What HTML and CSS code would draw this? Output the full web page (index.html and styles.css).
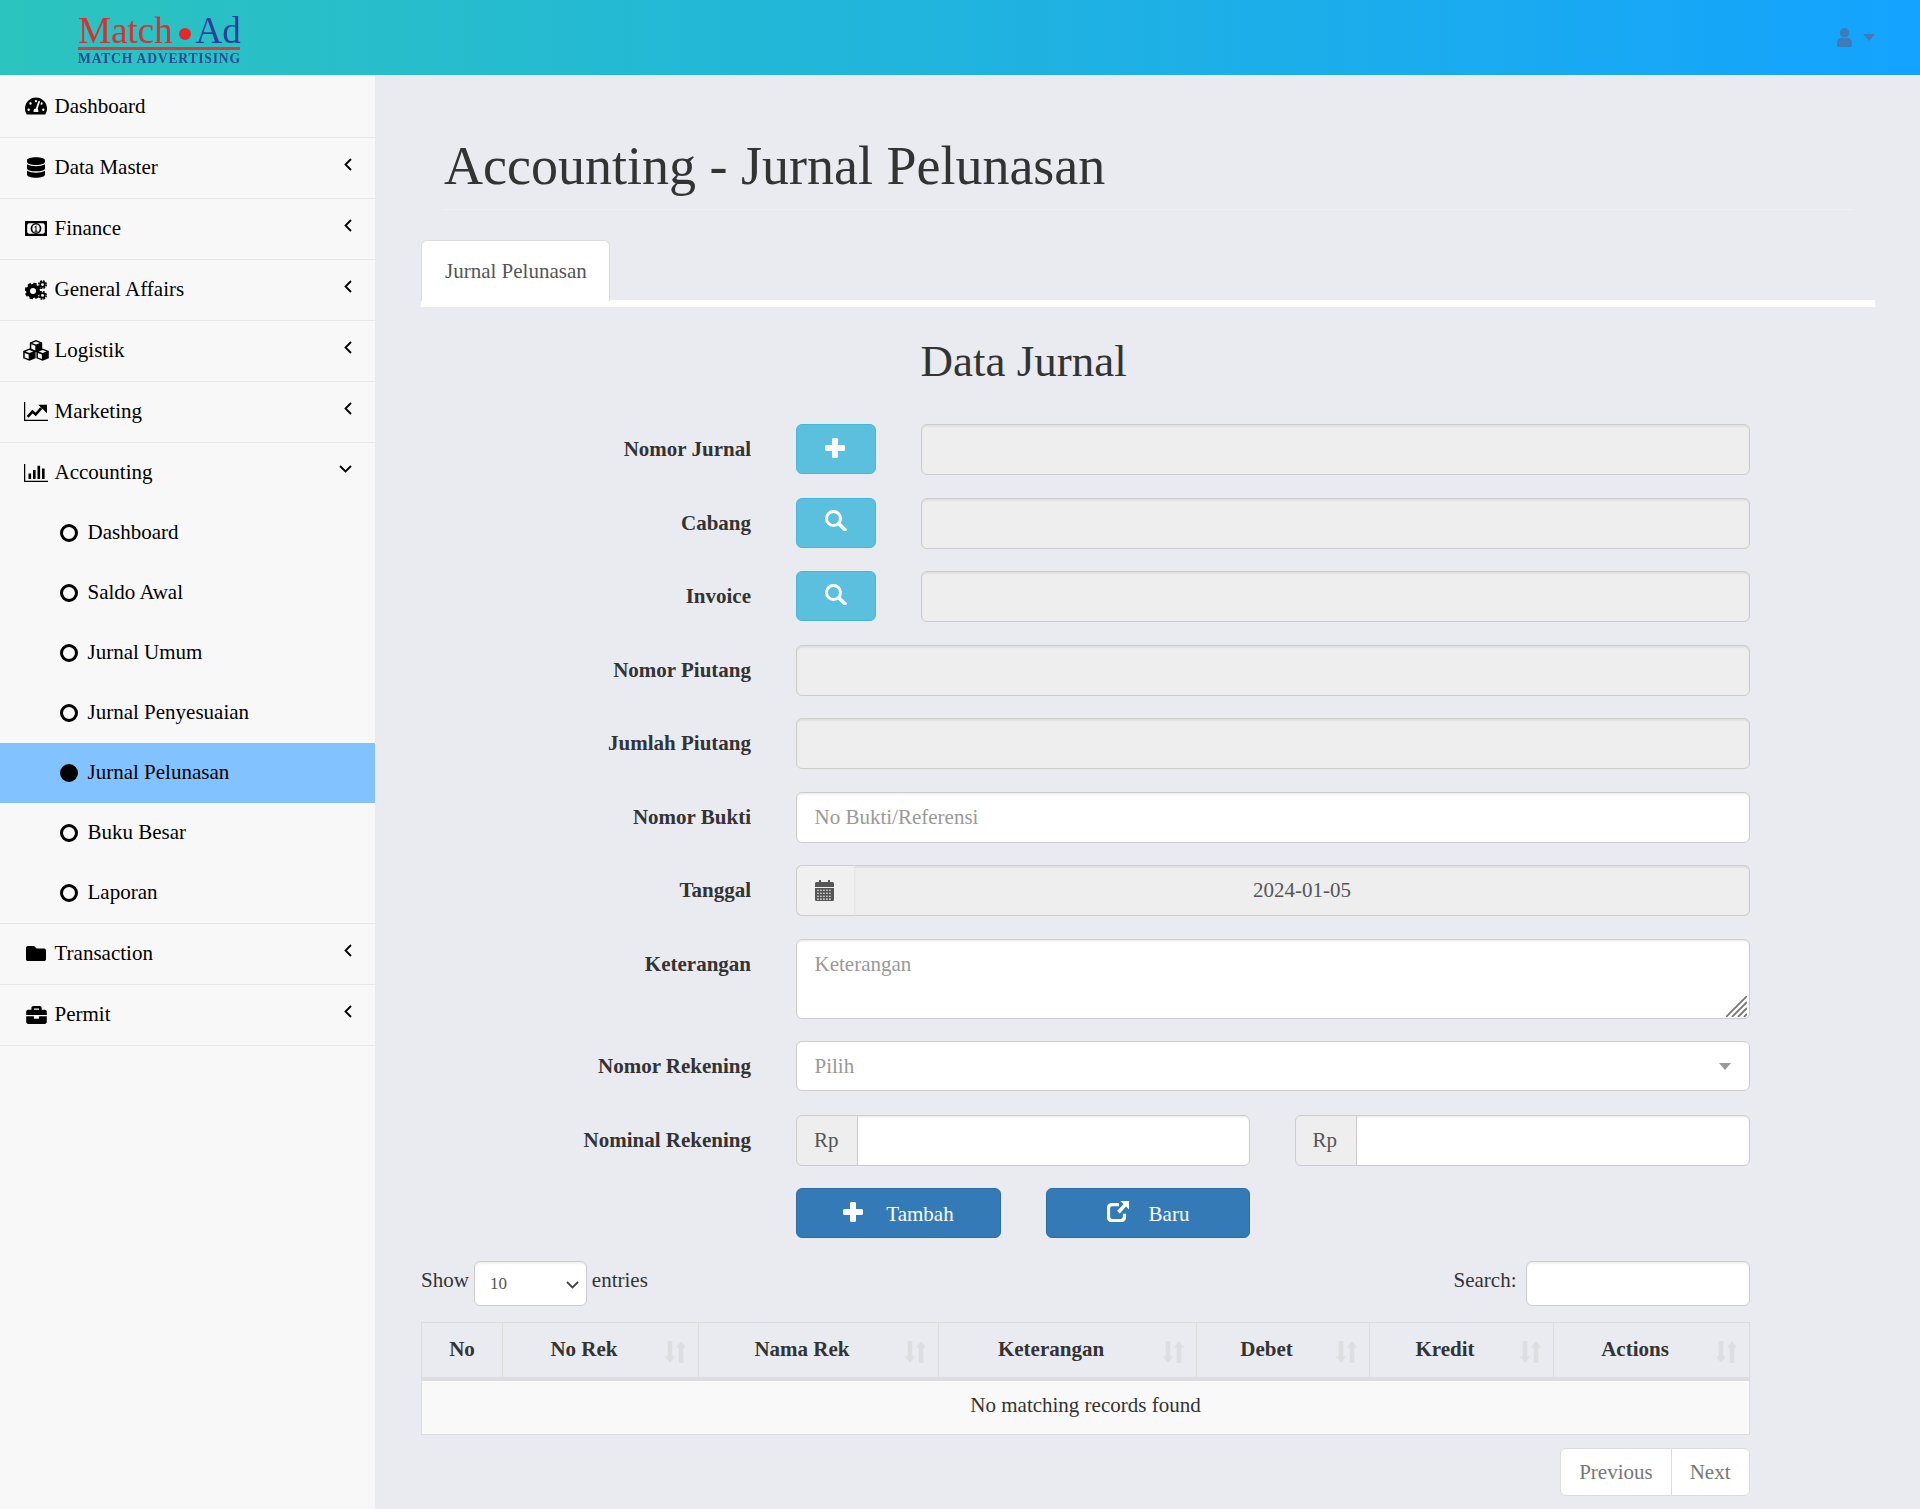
FILE: index.html
```html
<!DOCTYPE html>
<html lang="id">
<head>
<meta charset="utf-8">
<title>Accounting - Jurnal Pelunasan</title>
<link rel="stylesheet" href="styles.css">
</head>
<body>
<svg class="sprite" aria-hidden="true">
  <symbol id="i-dash" viewBox="0 0 576 512"><path d="M288 32C128.94 32 0 160.94 0 320c0 52.8 14.25 102.26 39.06 144.8 5.61 9.62 16.3 15.2 27.44 15.2h443c11.14 0 21.83-5.58 27.44-15.2C561.75 422.26 576 372.8 576 320c0-159.06-128.94-288-288-288zm0 64c14.71 0 26.58 10.13 30.32 23.65-1.11 2.26-2.64 4.23-3.45 6.67l-9.22 27.67c-5.13 3.49-10.97 6.01-17.64 6.01-17.67 0-32-14.33-32-32S270.33 96 288 96zM96 384c-17.67 0-32-14.33-32-32s14.33-32 32-32 32 14.33 32 32-14.33 32-32 32zm48-160c-17.67 0-32-14.33-32-32s14.33-32 32-32 32 14.33 32 32-14.33 32-32 32zm246.77-72.41l-61.33 184C343.13 347.33 352 364.54 352 384c0 11.72-3.38 22.55-8.88 32H232.88c-5.5-9.45-8.88-20.28-8.88-32 0-33.94 26.5-61.43 59.9-63.59l61.34-184.01c4.17-12.56 17.73-19.45 30.36-15.17 12.57 4.19 19.35 17.79 15.17 30.36zm14.66 57.2l15.52-46.55c3.47-1.29 7.13-2.23 11.05-2.23 17.67 0 32 14.33 32 32s-14.33 32-32 32c-11.38-.01-20.89-6.28-26.57-15.22zM480 384c-17.67 0-32-14.33-32-32s14.33-32 32-32 32 14.33 32 32-14.33 32-32 32z"/></symbol>
  <symbol id="i-db" viewBox="0 0 448 512"><path d="M448 73.143v45.714C448 159.143 347.667 192 224 192S0 159.143 0 118.857V73.143C0 32.857 100.333 0 224 0s224 32.857 224 73.143zM448 176v102.857C448 319.143 347.667 352 224 352S0 319.143 0 278.857V176c48.125 33.143 136.208 48.572 224 48.572S399.874 209.143 448 176zm0 160v102.857C448 479.143 347.667 512 224 512S0 479.143 0 438.857V336c48.125 33.143 136.208 48.572 224 48.572S399.874 369.143 448 336z"/></symbol>
  <symbol id="i-money" viewBox="0 0 22 15"><rect width="22" height="15"/><path d="M3.500 2.200h15a1.500 1.500 0 0 0 1.300 1.300v8a1.500 1.500 0 0 0-1.300 1.300h-15a1.500 1.500 0 0 0-1.300-1.300v-8a1.500 1.500 0 0 0 1.300-1.300z" fill="#f8f8f8"/><ellipse cx="11" cy="7.500" rx="5.400" ry="5.400"/><ellipse cx="11" cy="7.500" rx="3.700" ry="4.100" fill="#f8f8f8"/><path d="M9.600 5.800 11.500 4.500v5.300h1v1h-3v-1h1V6.200l-.8.5z"/></symbol>
  <symbol id="i-cogs" viewBox="0 0 22 20"><circle cx="8" cy="11" r="5" fill="none" stroke="#000" stroke-width="4"/><circle cx="8" cy="11" r="7" fill="none" stroke="#000" stroke-width="2.600" stroke-dasharray="3.300 2.200"/><circle cx="17.500" cy="4.600" r="2.300" fill="none" stroke="#000" stroke-width="1.700"/><circle cx="17.500" cy="4.600" r="3.700" fill="none" stroke="#000" stroke-width="1.500" stroke-dasharray="1.900 1"/><circle cx="17.500" cy="15.400" r="2.300" fill="none" stroke="#000" stroke-width="1.700"/><circle cx="17.500" cy="15.400" r="3.700" fill="none" stroke="#000" stroke-width="1.500" stroke-dasharray="1.900 1"/></symbol>
  <symbol id="i-cubes" viewBox="0 0 26 21"><path d="M13 0l6.200 2.400v7.300L13 12.200 6.800 9.700V2.400z"/><path d="M13 1.500l3.900 1.500L13 4.500 9.100 3z" fill="#f8f8f8"/><path d="M8.300 4.300l4 1.500v4.600l-4-1.600z" fill="#f8f8f8"/><path d="M6.400 8.600l6.200 2.400v7.300L6.400 20.800.2 18.300V11z"/><path d="M6.400 10.100l3.900 1.500-3.900 1.500-3.900-1.500z" fill="#f8f8f8"/><path d="M1.700 12.900l4 1.500V19l-4-1.600z" fill="#f8f8f8"/><path d="M19.600 8.600l6.200 2.400v7.300l-6.200 2.500-6.200-2.500V11z"/><path d="M19.600 10.100l3.900 1.500-3.900 1.500-3.900-1.500z" fill="#f8f8f8"/><path d="M14.900 12.900l4 1.500V19l-4-1.600z" fill="#f8f8f8"/></symbol>
  <symbol id="i-line" viewBox="0 0 24 19"><path d="M.6 0v18.300H24" fill="none" stroke="#000" stroke-width="1.300"/><path d="M3.600 14.800 8.500 9.500l3.200 3 5.500-6.300" fill="none" stroke="#000" stroke-width="2.600"/><path d="M14.200 2.800H23v8.500z"/></symbol>
  <symbol id="i-bar" viewBox="0 0 24 18"><path d="M.6 0v17.300H24" fill="none" stroke="#000" stroke-width="1.300"/><path d="M4.500 9.500h2.600V15H4.500zM9 6h2.600v9H9zM13.500 1.800h2.600V15h-2.600zM18 4.500h2.600V15H18z"/></symbol>
  <symbol id="i-folder" viewBox="0 64 512 384"><path d="M464 128H272l-64-64H48C21.490 64 0 85.490 0 112v288c0 26.510 21.490 48 48 48h416c26.510 0 48-21.490 48-48V176c0-26.510-21.490-48-48-48z"/></symbol>
  <symbol id="i-case" viewBox="0 32 512 448"><path d="M320 336c0 8.840-7.160 16-16 16h-96c-8.840 0-16-7.160-16-16v-48H0v144c0 25.600 22.400 48 48 48h416c25.600 0 48-22.400 48-48V288H320v48zm144-208h-80V80c0-25.600-22.400-48-48-48H176c-25.600 0-48 22.400-48 48v48H48c-25.600 0-48 22.400-48 48v80h512v-80c0-25.600-22.400-48-48-48zm-144 0H192V96h128v32z"/></symbol>
  <symbol id="i-plus" viewBox="0 0 20 20"><path d="M7 1.500C7 .7 7.700 0 8.500 0h3c.8 0 1.500.7 1.500 1.500V7h5.500c.8 0 1.500.7 1.500 1.500v3c0 .8-.7 1.500-1.500 1.500H13v5.500c0 .8-.7 1.500-1.500 1.500h-3C7.700 20 7 19.300 7 18.500V13H1.500C.7 13 0 12.300 0 11.500v-3C0 7.700.7 7 1.500 7H7z" fill="#fff"/></symbol>
  <symbol id="i-search" viewBox="0 0 22 21"><circle cx="8.500" cy="8.500" r="7" fill="none" stroke="#fff" stroke-width="3"/><path d="M13.800 13.800 20 19.700" fill="none" stroke="#fff" stroke-width="3.600" stroke-linecap="round"/></symbol>
  <symbol id="i-share" viewBox="0 0 22 21"><path d="M12 3.600H5.200C3 3.600 1.500 5.100 1.500 7.300v8.500c0 2.200 1.500 3.700 3.700 3.700h8.600c2.200 0 3.700-1.500 3.700-3.700v-3" fill="none" stroke="#fff" stroke-width="3.200"/><path d="M13.500 0H22v8.500l-2.900-2.900-6.300 6.800-2.700-2.700 6.500-6.500z" fill="#fff"/></symbol>
  <symbol id="i-cal" viewBox="0 0 19 21"><path d="M4 0h2v2h7V0h2v2h2.500A1.500 1.500 0 0 1 19 3.500V7H0V3.500A1.500 1.500 0 0 1 1.500 2H4zM0 8h19v11.500a1.500 1.500 0 0 1-1.500 1.500h-16A1.500 1.500 0 0 1 0 19.500z" fill="#555"/><path d="M2 10.200h15M2 13.200h15M2 16.200h15M2 19.100h15" fill="none" stroke="#eee" stroke-width="1.100" stroke-dasharray="1.800 1.200"/></symbol>
  <symbol id="i-user" viewBox="0 0 15 19"><circle cx="7.500" cy="4.700" r="4.700"/><path d="M0 15a5.500 5.500 0 0 1 5-5.200c1.700.8 3.300.8 5 0A5.500 5.500 0 0 1 15 15v2a2 2 0 0 1-2 2H2a2 2 0 0 1-2-2z"/></symbol>
  <symbol id="i-sort" viewBox="0 0 21 22"><path d="M2.700 0h4.600v15.500H10L5 22l-5-6.500h2.700zM13.700 22h4.600V6.500H21L16 0l-5 6.500h2.700z" fill="#dcdee1"/></symbol>
</svg>

<header class="topbar">
  <div class="logo">
    <div class="logo-main"><span class="logo-red">Match</span><span class="logo-dot"></span><span class="logo-blue">Ad</span></div>
    <div class="logo-rule"></div>
    <div class="logo-sub">MATCH ADVERTISING</div>
  </div>
  <div class="user-menu">
    <svg class="user-icon"><use href="#i-user"/></svg>
    <span class="caret"></span>
  </div>
</header>

<div class="layout">
  <aside class="sidebar">
    <ul class="nav">
      <li class="nav-item"><span class="nav-ico"><svg class="ic-dash"><use href="#i-dash"/></svg></span>Dashboard</li>
      <li class="nav-item"><span class="nav-ico"><svg class="ic-db"><use href="#i-db"/></svg></span>Data Master<svg class="chev" viewBox="0 0 8 13"><path d="M7 1 1.500 6.500 7 12"/></svg></li>
      <li class="nav-item"><span class="nav-ico"><svg class="ic-money"><use href="#i-money"/></svg></span>Finance<svg class="chev" viewBox="0 0 8 13"><path d="M7 1 1.500 6.500 7 12"/></svg></li>
      <li class="nav-item"><span class="nav-ico"><svg class="ic-cogs"><use href="#i-cogs"/></svg></span>General Affairs<svg class="chev" viewBox="0 0 8 13"><path d="M7 1 1.500 6.500 7 12"/></svg></li>
      <li class="nav-item"><span class="nav-ico"><svg class="ic-cubes"><use href="#i-cubes"/></svg></span>Logistik<svg class="chev" viewBox="0 0 8 13"><path d="M7 1 1.500 6.500 7 12"/></svg></li>
      <li class="nav-item"><span class="nav-ico"><svg class="ic-line"><use href="#i-line"/></svg></span>Marketing<svg class="chev" viewBox="0 0 8 13"><path d="M7 1 1.500 6.500 7 12"/></svg></li>
      <li class="nav-group">
        <div class="nav-head"><span class="nav-ico"><svg class="ic-bar"><use href="#i-bar"/></svg></span>Accounting<svg class="chev-down" viewBox="0 0 13 8"><path d="M1 1l5.500 5.500L12 1"/></svg></div>
        <ul class="sub">
          <li class="sub-item"><span class="dot"></span>Dashboard</li>
          <li class="sub-item"><span class="dot"></span>Saldo Awal</li>
          <li class="sub-item"><span class="dot"></span>Jurnal Umum</li>
          <li class="sub-item"><span class="dot"></span>Jurnal Penyesuaian</li>
          <li class="sub-item active"><span class="dot"></span>Jurnal Pelunasan</li>
          <li class="sub-item"><span class="dot"></span>Buku Besar</li>
          <li class="sub-item"><span class="dot"></span>Laporan</li>
        </ul>
      </li>
      <li class="nav-item"><span class="nav-ico"><svg class="ic-folder"><use href="#i-folder"/></svg></span>Transaction<svg class="chev" viewBox="0 0 8 13"><path d="M7 1 1.500 6.500 7 12"/></svg></li>
      <li class="nav-item"><span class="nav-ico"><svg class="ic-case"><use href="#i-case"/></svg></span>Permit<svg class="chev" viewBox="0 0 8 13"><path d="M7 1 1.500 6.500 7 12"/></svg></li>
    </ul>
  </aside>

  <main class="main">
    <div class="page-head"><h1>Accounting - Jurnal Pelunasan</h1></div>
    <div class="tabs"><div class="tab">Jurnal Pelunasan</div></div>

    <h3 class="form-title">Data Jurnal</h3>
    <form class="form">
      <div class="row">
        <label class="lbl">Nomor Jurnal</label>
        <div class="field with-btn">
          <button type="button" class="btn-info"><svg class="ic-plus"><use href="#i-plus"/></svg></button>
          <input class="ctl" disabled>
        </div>
      </div>
      <div class="row">
        <label class="lbl">Cabang</label>
        <div class="field with-btn">
          <button type="button" class="btn-info"><svg class="ic-search"><use href="#i-search"/></svg></button>
          <input class="ctl" disabled>
        </div>
      </div>
      <div class="row">
        <label class="lbl">Invoice</label>
        <div class="field with-btn">
          <button type="button" class="btn-info"><svg class="ic-search"><use href="#i-search"/></svg></button>
          <input class="ctl" disabled>
        </div>
      </div>
      <div class="row">
        <label class="lbl">Nomor Piutang</label>
        <div class="field"><input class="ctl" disabled></div>
      </div>
      <div class="row">
        <label class="lbl">Jumlah Piutang</label>
        <div class="field"><input class="ctl" disabled></div>
      </div>
      <div class="row">
        <label class="lbl">Nomor Bukti</label>
        <div class="field"><input class="ctl" placeholder="No Bukti/Referensi"></div>
      </div>
      <div class="row">
        <label class="lbl">Tanggal</label>
        <div class="field">
          <div class="group">
            <span class="addon addon-date"><svg class="ic-cal"><use href="#i-cal"/></svg></span>
            <input class="ctl ctl-date" value="2024-01-05" disabled>
          </div>
        </div>
      </div>
      <div class="row">
        <label class="lbl">Keterangan</label>
        <div class="field area-wrap">
          <textarea class="ctl ctl-area" placeholder="Keterangan"></textarea>
          <svg class="grip" viewBox="0 0 21 21"><path d="M0 21 21 0M6 21 21 6M12 21l9-9M18 21l3-3"/></svg>
        </div>
      </div>
      <div class="row row-select">
        <label class="lbl lbl-select">Nomor Rekening</label>
        <div class="field">
          <div class="select2"><span>Pilih</span><span class="select2-caret"></span></div>
        </div>
      </div>
      <div class="row row-money">
        <label class="lbl">Nominal Rekening</label>
        <div class="field money">
          <div class="group"><span class="addon">Rp</span><input class="ctl"></div>
          <div class="group"><span class="addon">Rp</span><input class="ctl"></div>
        </div>
      </div>
      <div class="row row-actions">
        <div class="lbl"></div>
        <div class="field money">
          <button type="button" class="btn-primary tambah"><svg class="ic-plus"><use href="#i-plus"/></svg>Tambah</button>
          <button type="button" class="btn-primary baru"><svg class="ic-share"><use href="#i-share"/></svg>Baru</button>
        </div>
      </div>
    </form>

    <section class="dt">
      <div class="dt-top">
        <div class="dt-len">Show
          <span class="dt-select"><select class="dt-sel"><option>10</option></select><svg class="dt-chev" viewBox="0 0 13 8"><path d="M1 1l5.500 5.500L12 1"/></svg></span>
          entries</div>
        <div class="dt-search">Search: <input class="ctl dt-input"></div>
      </div>
      <table class="table">
        <colgroup>
          <col class="c1"><col class="c2"><col class="c3"><col class="c4"><col class="c5"><col class="c6"><col class="c7">
        </colgroup>
        <thead>
          <tr>
            <th class="plain">No</th>
            <th>No Rek<svg class="sort"><use href="#i-sort"/></svg></th>
            <th>Nama Rek<svg class="sort"><use href="#i-sort"/></svg></th>
            <th>Keterangan<svg class="sort"><use href="#i-sort"/></svg></th>
            <th>Debet<svg class="sort"><use href="#i-sort"/></svg></th>
            <th>Kredit<svg class="sort"><use href="#i-sort"/></svg></th>
            <th>Actions<svg class="sort"><use href="#i-sort"/></svg></th>
          </tr>
        </thead>
        <tbody>
          <tr><td colspan="7">No matching records found</td></tr>
        </tbody>
      </table>
      <div class="pager">
        <span class="page-btn first">Previous</span><span class="page-btn last">Next</span>
      </div>
    </section>
  </main>
</div>
</body>
</html>
```
FILE: styles.css
```css
* { box-sizing: border-box; }
html, body { margin: 0; padding: 0; }
body {
  font-family: "Liberation Serif", "Times New Roman", serif;
  font-size: 21px;
  color: #333;
  background: #e9ebf0;
  min-height: 1509px;
}
.sprite { display: none; }
ul { list-style: none; margin: 0; padding: 0; }

/* top bar */
.topbar {
  height: 75px;
  display: flex;
  justify-content: space-between;
  background: linear-gradient(90deg, #2cc4be 0%, #14a3ff 100%);
}
.logo { margin-left: 78px; padding-top: 14px; width: 162px; filter: blur(.35px); }
.logo-main { font-size: 37px; line-height: 34px; white-space: nowrap; height: 33px; }
.logo-red { color: #d9302f; }
.logo-blue { color: #2c3f9c; }
.logo-dot {
  display: inline-block;
  width: 12px;
  height: 12px;
  margin: 0 5px 0 6px;
  border-radius: 50%;
  background: #e5272a;
  vertical-align: 3px;
}
.logo-rule { height: 3px; background: #dc3a36; }
.logo-sub {
  margin-top: 2.400px;
  font-size: 13.6px;
  line-height: 14px;
  font-weight: bold;
  letter-spacing: .8px;
  color: #2b4a94;
  white-space: nowrap;
}
.user-menu { display: flex; align-items: flex-start; padding: 28px 45px 0 0; }
.user-icon { width: 15px; height: 19px; fill: #3c7cb8; }
.caret {
  margin: 6px 0 0 11px;
  border-left: 6px solid transparent;
  border-right: 6px solid transparent;
  border-top: 7px solid #3c7cb8;
}

/* layout */
.layout { display: flex; min-height: 1434px; }
.sidebar { width: 375px; flex: none; background: #f8f8f8; color: #000; }
.nav-item, .nav-head {
  display: flex;
  align-items: center;
  padding: 0 23px 1px 21px;
}
.nav-item { height: 61px; border-bottom: 1px solid #e7e7e7; }
.nav-item:first-child { height: 63px; padding-bottom: 0; }
.nav-head { height: 60px; }
.nav-group { border-bottom: 1px solid #e7e7e7; }
.nav-ico {
  width: 30px;
  margin-right: 3.500px;
  display: flex;
  justify-content: center;
  flex: none;
}
.nav-ico svg { display: block; fill: #000; }
.ic-dash { width: 22px; height: 20px; }
.ic-db { width: 18px; height: 21px; }
.ic-money { width: 22px; height: 15px; }
.ic-cogs { width: 22px; height: 20px; }
.ic-cubes { width: 26px; height: 21px; }
.ic-line { width: 24px; height: 19px; }
.ic-bar { width: 24px; height: 18px; }
.ic-folder { width: 20px; height: 17px; }
.ic-case { width: 21px; height: 18px; }
.chev, .chev-down { margin-left: auto; fill: none; stroke: #000; stroke-width: 1.800; }
.chev { width: 8px; height: 13px; margin-bottom: 7px; }
.chev-down { width: 13px; height: 8px; margin-bottom: 8px; }
.sub-item { height: 60px; padding: 0 0 1px 60px; display: flex; align-items: center; }
.dot {
  width: 18px;
  height: 18px;
  margin-right: 9.500px;
  border: 3px solid #000;
  border-radius: 50%;
  flex: none;
}
.sub-item.active { background: #82c2ff; }
.sub-item.active .dot { background: #000; }

/* main */
.main { flex: 1; min-width: 0; padding: 61px 45px 0 46px; }
.page-head { margin: 0 23px 0 23px; padding-bottom: 13px; border-bottom: 1px solid #eef0f3; }
h1 { margin: 0; font-size: 54px; font-weight: 400; line-height: 60px; color: #333; }
.tabs { height: 67px; margin-top: 30px; border-bottom: 7px solid #fff; }
.tab {
  width: 189px;
  height: 61px;
  padding-left: 23px;
  line-height: 61px;
  color: #555;
  background: #fff;
  border: 1px solid #ddd;
  border-bottom: 0;
  border-radius: 6px 6px 0 0;
}
.form-title { margin: 29px 0 38px 499.500px; font-size: 45px; font-weight: 400; line-height: 50px; color: #333; }

/* form */
.form { width: 1329px; }
.row { display: flex; margin-bottom: 22.500px; }
.lbl {
  width: 330px;
  height: 50px;
  margin-right: 45px;
  flex: none;
  text-align: right;
  font-weight: bold;
  line-height: 51px;
  color: #333;
}
.field { flex: 1; min-width: 0; }
.with-btn { display: flex; gap: 45px; align-items: flex-start; }
.ctl {
  display: block;
  width: 100%;
  height: 51px;
  padding: 0 17.500px;
  font: inherit;
  color: #555;
  background: #fff;
  border: 1px solid #ccc;
  border-radius: 6px;
  box-shadow: inset 0 1.500px 1.500px rgba(0, 0, 0, .075);
  outline: 0;
}
.ctl::placeholder { color: #999; opacity: 1; }
.ctl:disabled { background: #eee; opacity: 1; }
.btn-info {
  width: 80px;
  height: 50px;
  flex: none;
  padding: 0;
  background: #5bc0de;
  border: 1px solid #46b8da;
  border-radius: 6px;
  display: flex;
  align-items: center;
  justify-content: center;
}
.ic-plus { width: 20px; height: 20px; display: block; }
.ic-search { width: 22px; height: 21px; display: block; margin-bottom: 4px; }
.btn-info .ic-plus { margin-bottom: 2px; margin-right: 2px; }
.group { display: flex; width: 100%; }
.addon {
  flex: none;
  width: 62px;
  height: 51px;
  display: flex;
  align-items: center;
  padding-left: 17px;
  color: #555;
  background: #eee;
  border: 1px solid #ccc;
  border-radius: 6px 0 0 6px;
}
.group .ctl { margin-left: -1px; flex: 1; min-width: 0; width: auto; border-radius: 0 6px 6px 0; }
.addon-date { width: 59px; background: #f0f0f0; border-right-color: #e6e6e6; padding-left: 18px; }
.ic-cal { width: 19px; height: 21px; display: block; }
.ctl-date { text-align: center; border-left-color: #e6e6e6; }
.area-wrap { position: relative; }
.ctl-area { height: 80px; padding-top: 10px; resize: none; line-height: 1.420; display: block; }
.grip {
  position: absolute;
  right: 3px;
  bottom: 2px;
  width: 21px;
  height: 21px;
  fill: none;
  stroke: #777;
  stroke-width: 1.800;
}
.row-select { margin-bottom: 24px; }
.lbl-select { line-height: 50px; }
.select2 {
  height: 50px;
  padding: 0 18px 0 17.500px;
  display: flex;
  align-items: center;
  justify-content: space-between;
  color: #999;
  background: #fff;
  border: 1px solid #ccc;
  border-radius: 6px;
}
.select2-caret {
  border-left: 6px solid transparent;
  border-right: 6px solid transparent;
  border-top: 7px solid #999;
}
.money { display: flex; gap: 45px; align-items: flex-start; }
.money .group { flex: 1; width: auto; min-width: 0; }
.money .group:first-child { flex: none; width: 453.500px; }
.row-money { margin-bottom: 22px; }
.row-actions { margin-bottom: 23px; }
.btn-primary {
  height: 50px;
  padding: 3px 0 0;
  display: flex;
  align-items: center;
  justify-content: center;
  font: inherit;
  color: #fff;
  background: #337ab7;
  border: 1px solid #2e6da4;
  border-radius: 6px;
}
.tambah { width: 205px; gap: 23px; }
.baru { width: 204px; gap: 20px; }
.btn-primary svg { margin-bottom: 6px; }
.ic-share { width: 22px; height: 21px; display: block; }

/* data table */
.dt { width: 1328.500px; }
.dt-top { display: flex; justify-content: space-between; align-items: flex-start; height: 45px; margin-bottom: 16px; line-height: 39px; }
.dt-select { position: relative; display: inline-block; vertical-align: top; }
.dt-sel {
  display: block;
  width: 112.500px;
  height: 45px;
  padding: 0 0 0 15px;
  font: inherit;
  font-size: 17px;
  color: #555;
  background: #fff;
  border: 1px solid #ccc;
  border-radius: 6px;
  box-shadow: inset 0 1.500px 1.500px rgba(0, 0, 0, .075);
  appearance: none;
}
.dt-chev {
  position: absolute;
  right: 8px;
  top: 20px;
  width: 13px;
  height: 8px;
  fill: none;
  stroke: #444;
  stroke-width: 1.800;
}
.dt-search { display: flex; gap: 9px; }
.dt-input { width: 224px; height: 45px; }
.table { width: 1328px; border-collapse: collapse; table-layout: fixed; }
.c1 { width: 81px; }
.c2 { width: 196px; }
.c3 { width: 240px; }
.c4 { width: 258px; }
.c5 { width: 173px; }
.c6 { width: 184px; }
.c7 { width: 196px; }
th {
  position: relative;
  height: 56px;
  padding: 0 45px 0 12px;
  font-weight: bold;
  text-align: center;
  color: #333;
  border: 1px solid #ddd;
  border-bottom: 4px solid #ddd;
}
th.plain { padding: 0 12px; }
.sort { position: absolute; right: 12px; top: 18px; width: 21px; height: 22px; }
td {
  height: 56px;
  padding: 0 12px 3px;
  text-align: center;
  background: #f9f9f9;
  border: 1px solid #ddd;
  border-top: 0;
}
.pager { display: flex; justify-content: flex-end; margin-top: 13px; }
.page-btn {
  height: 48px;
  padding: 0 18px;
  line-height: 46px;
  color: #777;
  background: #fff;
  border: 1px solid #ddd;
}
.page-btn.first { border-radius: 6px 0 0 6px; }
.page-btn.last { margin-left: -1px; border-radius: 0 6px 6px 0; }
```
